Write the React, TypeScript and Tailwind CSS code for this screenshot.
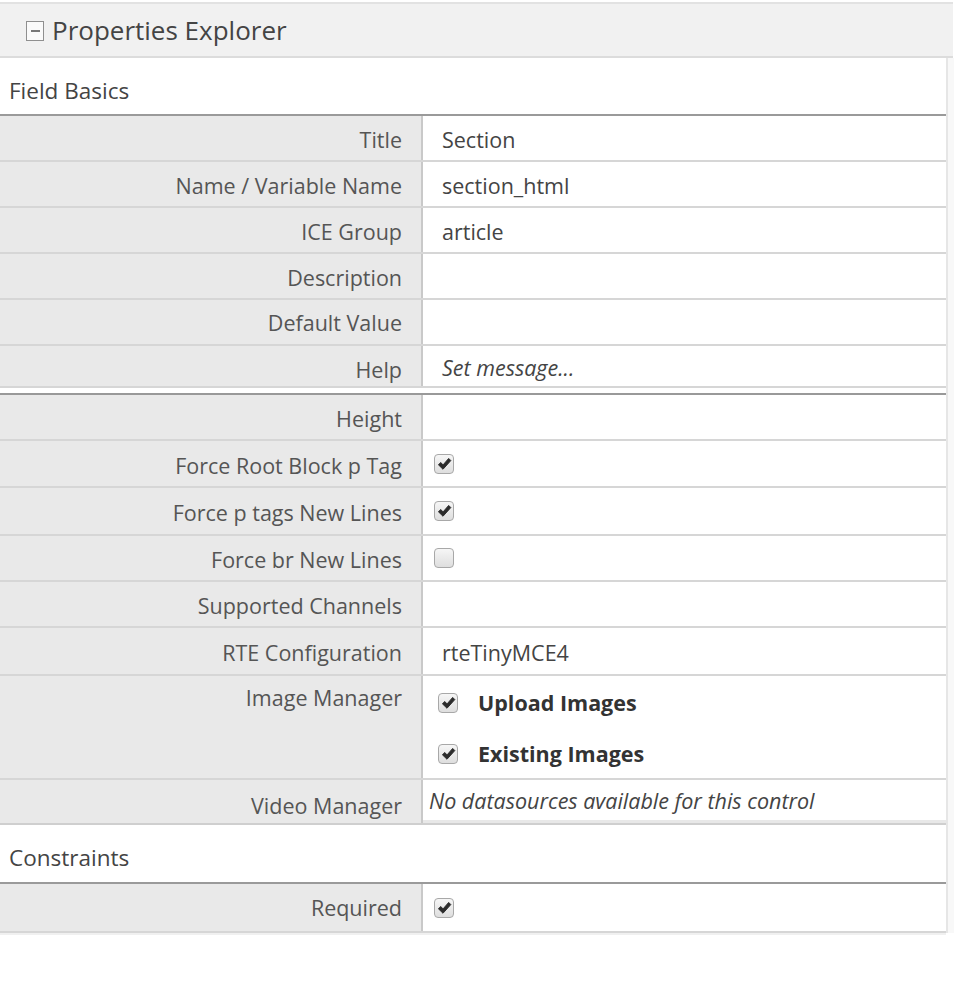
import React from "react";

const font = { fontFamily: '"Open Sans", "Noto Sans", sans-serif' };

function Check({ checked }: { checked: boolean }) {
  return (
    <div className="w-[20px] h-[20px] rounded-[4px] border border-[#a8a8a8] bg-gradient-to-b from-[#f6f6f6] to-[#dedede] flex items-center justify-center shadow-[0_1px_0_#ffffff]">
      {checked && (
        <svg width="15" height="14" viewBox="0 0 14 13">
          <path d="M1.3 7.2 L3.6 5.1 L5.6 7.4 L10.9 1.3 L12.9 3.3 L5.6 11.4 Z" fill="#2b2b2b" stroke="#2b2b2b" strokeWidth="0.9" strokeLinejoin="round" />
        </svg>
      )}
    </div>
  );
}

function Row({
  label,
  h,
  children,
  labelClass = "items-center pt-[4px]",
  valueClass = "items-center pl-[19px] pt-[4px]",
}: {
  label: string;
  h: string;
  children?: React.ReactNode;
  labelClass?: string;
  valueClass?: string;
}) {
  return (
    <div className={`flex border-b-2 border-[#d6d6d6] ${h}`}>
      <div className={`w-[423px] shrink-0 bg-[#e9e9e9] border-r-2 border-[#c9c9c9] flex justify-end pr-[19px] text-[#555555] ${labelClass}`}>
        {label}
      </div>
      <div className={`flex-1 bg-white flex text-[#444444] ${valueClass}`}>{children}</div>
    </div>
  );
}

export default function App() {
  return (
    <div className="w-[964px] h-[988px] bg-white text-[21.5px] leading-[28px]" style={font}>
      <div className="pt-[2px] w-[953px]">
        <div className="border-t-2 border-[#e2e2e2] border-b-2 border-b-[#dcdcdc] bg-[#f1f1f1] h-[56px] flex items-center pl-[26px]">
          <div className="w-[18px] h-[20px] border border-[#8f8f8f] bg-[#fafafa] flex items-center justify-center mr-[8px] mt-[1px]">
            <div className="w-[9px] h-[2px] bg-[#777777]" />
          </div>
          <span className="text-[26px] text-[#444444] leading-[32px]">Properties Explorer</span>
        </div>
      </div>

      <div className="flex w-[954px]">
        <div className="w-[946px] shrink-0">
          {/* Field Basics */}
          <div className="h-[58px] border-b-2 border-[#9a9a9a] flex items-center pl-[9px] pt-[10px] text-[22.5px] text-[#444444]">
            Field Basics
          </div>
          <Row label="Title" h="h-[46px]">Section</Row>
          <Row label="Name / Variable Name" h="h-[46px]">section_html</Row>
          <Row label="ICE Group" h="h-[46px]">article</Row>
          <Row label="Description" h="h-[46px]" />
          <Row label="Default Value" h="h-[46px]" labelClass="items-center pt-[2px]" />
          <div className="flex h-[42px] border-b-2 border-[#d6d6d6] w-[954px]">
            <div className="w-[423px] shrink-0 bg-[#e9e9e9] border-r-2 border-[#c9c9c9] flex items-center justify-end pr-[19px] pt-[8px] text-[#555555]">
              Help
            </div>
            <div className="w-[523px] bg-white flex items-center pl-[19px] italic text-[#444444] pt-[4px]">Set message...</div>
            <div className="flex-1 bg-white" />
          </div>
          <div className="h-[5px]" />
          <div className="border-t-2 border-[#999999]" />
          <Row label="Height" h="h-[46px]" />
          <Row label="Force Root Block p Tag" h="h-[47px]" valueClass="items-center pl-[11px]">
            <Check checked />
          </Row>
          <Row label="Force p tags New Lines" h="h-[48px]" valueClass="items-center pl-[11px]">
            <Check checked />
          </Row>
          <Row label="Force br New Lines" h="h-[46px]" valueClass="items-center pl-[11px]">
            <Check checked={false} />
          </Row>
          <Row label="Supported Channels" h="h-[46px]" />
          <Row label="RTE Configuration" h="h-[48px]">rteTinyMCE4</Row>
          <Row
            label="Image Manager"
            h="h-[104px]"
            labelClass="items-start pt-[8px]"
            valueClass="flex-col justify-center pl-[15px] gap-[23px] pt-[2px]"
          >
            <div className="flex items-center gap-[20px] font-bold text-[#333333]">
              <Check checked />
              <span>Upload Images</span>
            </div>
            <div className="flex items-center gap-[20px] font-bold text-[#333333]">
              <Check checked />
              <span>Existing Images</span>
            </div>
          </Row>
          <div className="flex h-[45px] border-b-2 border-[#cfcfcf]">
            <div className="w-[423px] shrink-0 bg-[#e9e9e9] border-r-2 border-[#c9c9c9] flex items-center justify-end pr-[19px] pt-[8px] text-[#555555]">
              Video Manager
            </div>
            <div className="flex-1 bg-white flex flex-col">
              <div className="flex-1 flex items-center pl-[6px] pt-[2px] italic text-[#444444]">No datasources available for this control</div>
              <div className="h-[3px] bg-[#e8e8e8]" />
            </div>
          </div>
          {/* Constraints */}
          <div className="h-[59px] border-b-2 border-[#9a9a9a] flex items-center pl-[9px] pt-[9px] text-[22.5px] text-[#444444]">
            Constraints
          </div>
          <Row label="Required" h="h-[49px]" labelClass="items-center pt-[1px]" valueClass="items-center pl-[11px]">
            <Check checked />
          </Row>
          <div className="h-[2px] bg-[#f0f0f0]" />
        </div>
        <div className="flex">
          <div className="w-[2px] bg-[#e6e6e6] h-[875px]" />
          <div className="w-[6px] bg-[#f8f8f8] h-[875px]" />
        </div>
      </div>
    </div>
  );
}
